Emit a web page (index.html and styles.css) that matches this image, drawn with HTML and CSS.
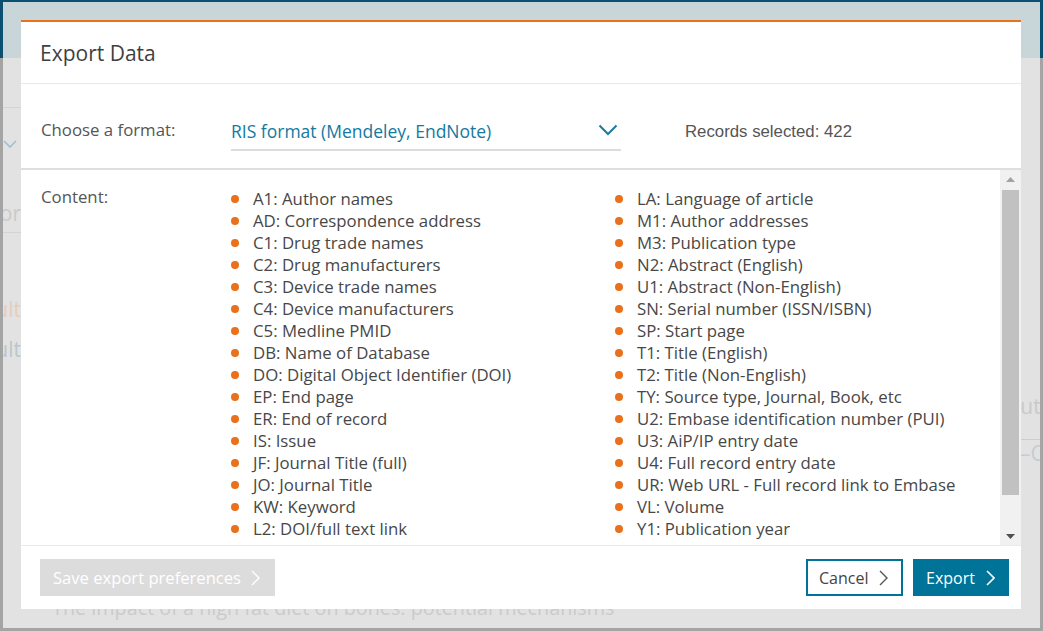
FILE: index.html
```html
<!DOCTYPE html>
<html lang="en">
<head>
<meta charset="utf-8">
<title>Export Data</title>
<link rel="stylesheet" href="styles.css">
</head>
<body>
<div class="screen">
  <div class="screen-head"></div>
  <div class="screen-body">
    <div class="bg-side bg-left">
      <div class="bg-block b1"></div>
      <div class="bg-block b2">
        <div class="bg-line l-chev"><svg width="14" height="8" viewBox="0 0 14 8"><polyline points="1,1 7,7 13,1" fill="none" stroke="#9dbfce" stroke-width="1.6"/></svg></div>
        <div class="bg-line l-or">Vendor</div>
      </div>
      <div class="bg-block b3">
        <div class="bg-line l-ult1">Result</div>
        <div class="bg-line l-ult2">Result</div>
      </div>
    </div>
    <div class="bg-center">
      <p class="bg-title">The impact of a high fat diet on bones: potential mechanisms</p>
    </div>
    <div class="bg-side bg-right">
      <div class="bg-rline r-auth">Auth</div>
      <div class="bg-rline r-c">–C</div>
    </div>
  </div>
</div>

<div class="modal" role="dialog" aria-labelledby="modal-title">
  <header class="modal-header">
    <h2 id="modal-title" class="modal-title">Export Data</h2>
  </header>

  <div class="format-row">
    <span class="format-label">Choose a format:</span>
    <div class="format-select">
      <span class="format-value">RIS format (Mendeley, EndNote)</span>
      <svg class="format-chevron" width="20" height="12" viewBox="0 0 20 12"><polyline points="1.5,1.5 10,10 18.5,1.5" fill="none" stroke="#1a7aa0" stroke-width="2"/></svg>
    </div>
    <span class="records">Records selected: 422</span>
  </div>

  <div class="content-area">
    <div class="content-inner">
      <span class="content-label">Content:</span>
      <ul class="field-list">
        <li>A1: Author names</li>
        <li>AD: Correspondence address</li>
        <li>C1: Drug trade names</li>
        <li>C2: Drug manufacturers</li>
        <li>C3: Device trade names</li>
        <li>C4: Device manufacturers</li>
        <li>C5: Medline PMID</li>
        <li>DB: Name of Database</li>
        <li>DO: Digital Object Identifier (DOI)</li>
        <li>EP: End page</li>
        <li>ER: End of record</li>
        <li>IS: Issue</li>
        <li>JF: Journal Title (full)</li>
        <li>JO: Journal Title</li>
        <li>KW: Keyword</li>
        <li>L2: DOI/full text link</li>
      </ul>
      <ul class="field-list">
        <li>LA: Language of article</li>
        <li>M1: Author addresses</li>
        <li>M3: Publication type</li>
        <li>N2: Abstract (English)</li>
        <li>U1: Abstract (Non-English)</li>
        <li>SN: Serial number (ISSN/ISBN)</li>
        <li>SP: Start page</li>
        <li>T1: Title (English)</li>
        <li>T2: Title (Non-English)</li>
        <li>TY: Source type, Journal, Book, etc</li>
        <li>U2: Embase identification number (PUI)</li>
        <li>U3: AiP/IP entry date</li>
        <li>U4: Full record entry date</li>
        <li>UR: Web URL - Full record link to Embase</li>
        <li>VL: Volume</li>
        <li>Y1: Publication year</li>
      </ul>
    </div>
    <div class="scrollbar" aria-hidden="true">
      <div class="sb-btn"><svg width="9" height="5" viewBox="0 0 9 5"><polygon points="0,5 4.5,0 9,5" fill="#a3a3a3"/></svg></div>
      <div class="sb-track"><div class="sb-thumb"></div></div>
      <div class="sb-btn"><svg width="9" height="5" viewBox="0 0 9 5"><polygon points="0,0 9,0 4.5,5" fill="#505050"/></svg></div>
    </div>
  </div>

  <footer class="modal-footer">
    <button class="btn btn-disabled" type="button"><span>Save export preferences</span><svg class="chev" width="9" height="16" viewBox="0 0 9 16"><polyline points="1,1 8,8 1,15" fill="none" stroke="currentColor" stroke-width="1.4"/></svg></button>
    <div class="footer-actions">
      <button class="btn btn-outline" type="button"><span>Cancel</span><svg class="chev" width="9" height="16" viewBox="0 0 9 16"><polyline points="1,1 8,8 1,15" fill="none" stroke="currentColor" stroke-width="1.4"/></svg></button>
      <button class="btn btn-primary" type="button"><span>Export</span><svg class="chev" width="9" height="16" viewBox="0 0 9 16"><polyline points="1,1 8,8 1,15" fill="none" stroke="currentColor" stroke-width="1.6"/></svg></button>
    </div>
  </footer>
</div>
</body>
</html>
```

FILE: styles.css
```css
* { box-sizing: border-box; }

html, body {
  margin: 0;
  height: 631px;
  overflow: hidden;
}

body {
  background: linear-gradient(#0b5070 0, #0b5070 58px, #a4a4a4 58px);
  font-family: "Open Sans", "Liberation Sans", sans-serif;
  color: #444;
}

/* ---------- dimmed page behind the dialog ---------- */
.screen {
  margin: 2px 3px 0 3px;
  height: 626px;
  display: flex;
  flex-direction: column;
  background: #e2e2e2;
}

.screen-head {
  height: 56px;
  background: #c8d6da;
  flex: none;
}

.screen-body {
  flex: 1;
  display: flex;
  overflow: hidden;
}

.bg-side {
  flex: none;
  display: flex;
  flex-direction: column;
  overflow: hidden;
}

.bg-left { width: 18px; }
.bg-right { width: 20px; margin-left: auto; padding-top: 335px; }

.bg-block { border-bottom: 1px solid #d3d3d3; }
.b1 { height: 50px; }
.b2 { height: 125px; padding-top: 26px; }
.b3 { border-bottom: none; padding-top: 63px; }

.bg-line,
.bg-rline {
  display: flex;
  white-space: nowrap;
  font-size: 21px;
  line-height: 26px;
  height: 26px;
  color: #cacaca;
}

.bg-line { justify-content: flex-end; }

.l-chev { height: 20px; align-items: center; padding-right: 4px; }
.l-or { margin-top: 46px; }
.l-ult1 { color: #e5cdbd; }
.l-ult2 { margin-top: 14px; color: #bcc6cc; }

.r-auth { color: #c9c9c9; margin-left: -13px; }
.r-c { margin-top: 20px; border-top: 1px solid #bcd3dc; color: #c5ccd2; }

.bg-center {
  flex: 1;
  padding: 537px 0 0 31px;
}

.bg-title {
  margin: 0;
  font-size: 19.8px;
  line-height: 26px;
  color: #cbcbcb;
  white-space: nowrap;
}

/* ---------- dialog ---------- */
.modal {
  position: fixed;
  left: 21px;
  top: 20px;
  width: 1000px;
  height: 589px;
  background: #fff;
  border-top: 2px solid #e9711c;
  display: flex;
  flex-direction: column;
}

.modal-header {
  height: 62px;
  flex: none;
  display: flex;
  align-items: center;
  padding: 0 19px;
  border-bottom: 1px solid #e8e8e8;
}

.modal-title {
  margin: 0;
  font-size: 21px;
  font-weight: 400;
  color: #3f3f3f;
}

.format-row {
  height: 86px;
  flex: none;
  display: flex;
  align-items: center;
  padding: 0 20px;
  border-bottom: 2px solid #dedede;
}

.format-label {
  width: 190px;
  font-size: 16.8px;
  color: #555;
  margin-top: 6px;
}

.format-select {
  width: 390px;
  height: 36px;
  margin-top: 14px;
  display: flex;
  align-items: center;
  justify-content: space-between;
  border-bottom: 2px solid #dcdcdc;
  padding: 0 3px 2px 0;
}

.format-value {
  font-size: 17.5px;
  color: #1379a0;
}

.format-chevron { margin-bottom: 2px; }

.records {
  margin-left: 64px;
  margin-top: 11px;
  font-family: "Liberation Sans", Arial, sans-serif;
  font-size: 16.8px;
  color: #555;
}

/* ---------- scrolling content ---------- */
.content-area {
  flex: 1;
  display: flex;
  overflow: hidden;
  border-bottom: 1px solid #eaeaea;
}

.content-inner {
  flex: 1;
  display: grid;
  grid-template-columns: 190px 384px 1fr;
  align-content: start;
  padding: 16px 0 0 20px;
}

.content-label {
  font-size: 16.8px;
  color: #555;
  line-height: 22px;
}

.field-list {
  list-style: none;
  margin: 0;
  padding: 2px 0 0 0;
}

.field-list li {
  position: relative;
  padding-left: 22px;
  font-size: 16.8px;
  line-height: 22px;
  height: 22px;
  color: #474747;
  white-space: nowrap;
}

.field-list li::before {
  content: "";
  position: absolute;
  left: 0;
  top: 7px;
  width: 8px;
  height: 8px;
  border-radius: 50%;
  background: #e9711c;
}

.scrollbar {
  width: 21px;
  flex: none;
  display: flex;
  flex-direction: column;
  background: #f1f1f1;
}

.sb-btn {
  height: 18px;
  flex: none;
  display: flex;
  align-items: center;
  justify-content: center;
}

.sb-track {
  flex: 1;
  padding: 2px 2px 32px 2px;
  display: flex;
}

.sb-thumb {
  flex: 1;
  background: #c1c1c1;
}

/* ---------- footer ---------- */
.modal-footer {
  height: 63px;
  flex: none;
  display: flex;
  align-items: center;
  justify-content: space-between;
  padding: 0 12px 0 19px;
}

.footer-actions {
  display: flex;
  gap: 10px;
}

.btn {
  height: 37px;
  display: inline-flex;
  align-items: center;
  gap: 11px;
  font-family: "Open Sans", "Liberation Sans", sans-serif;
  font-size: 16px;
  padding: 0 10px 0 11px;
  border: 2px solid transparent;
  background: none;
  cursor: pointer;
  white-space: nowrap;
}

.btn .chev { flex: none; }

.btn-disabled {
  width: 235px;
  font-size: 16.6px;
  background: #dcdcdc;
  border-color: #dcdcdc;
  color: #fff;
  gap: 10px;
}

.btn-outline {
  width: 97px;
  border-color: #00739a;
  color: #444;
}

.btn-outline .chev { color: #555; }

.btn-primary {
  width: 96px;
  background: #007398;
  border-color: #007398;
  color: #fff;
}
```
